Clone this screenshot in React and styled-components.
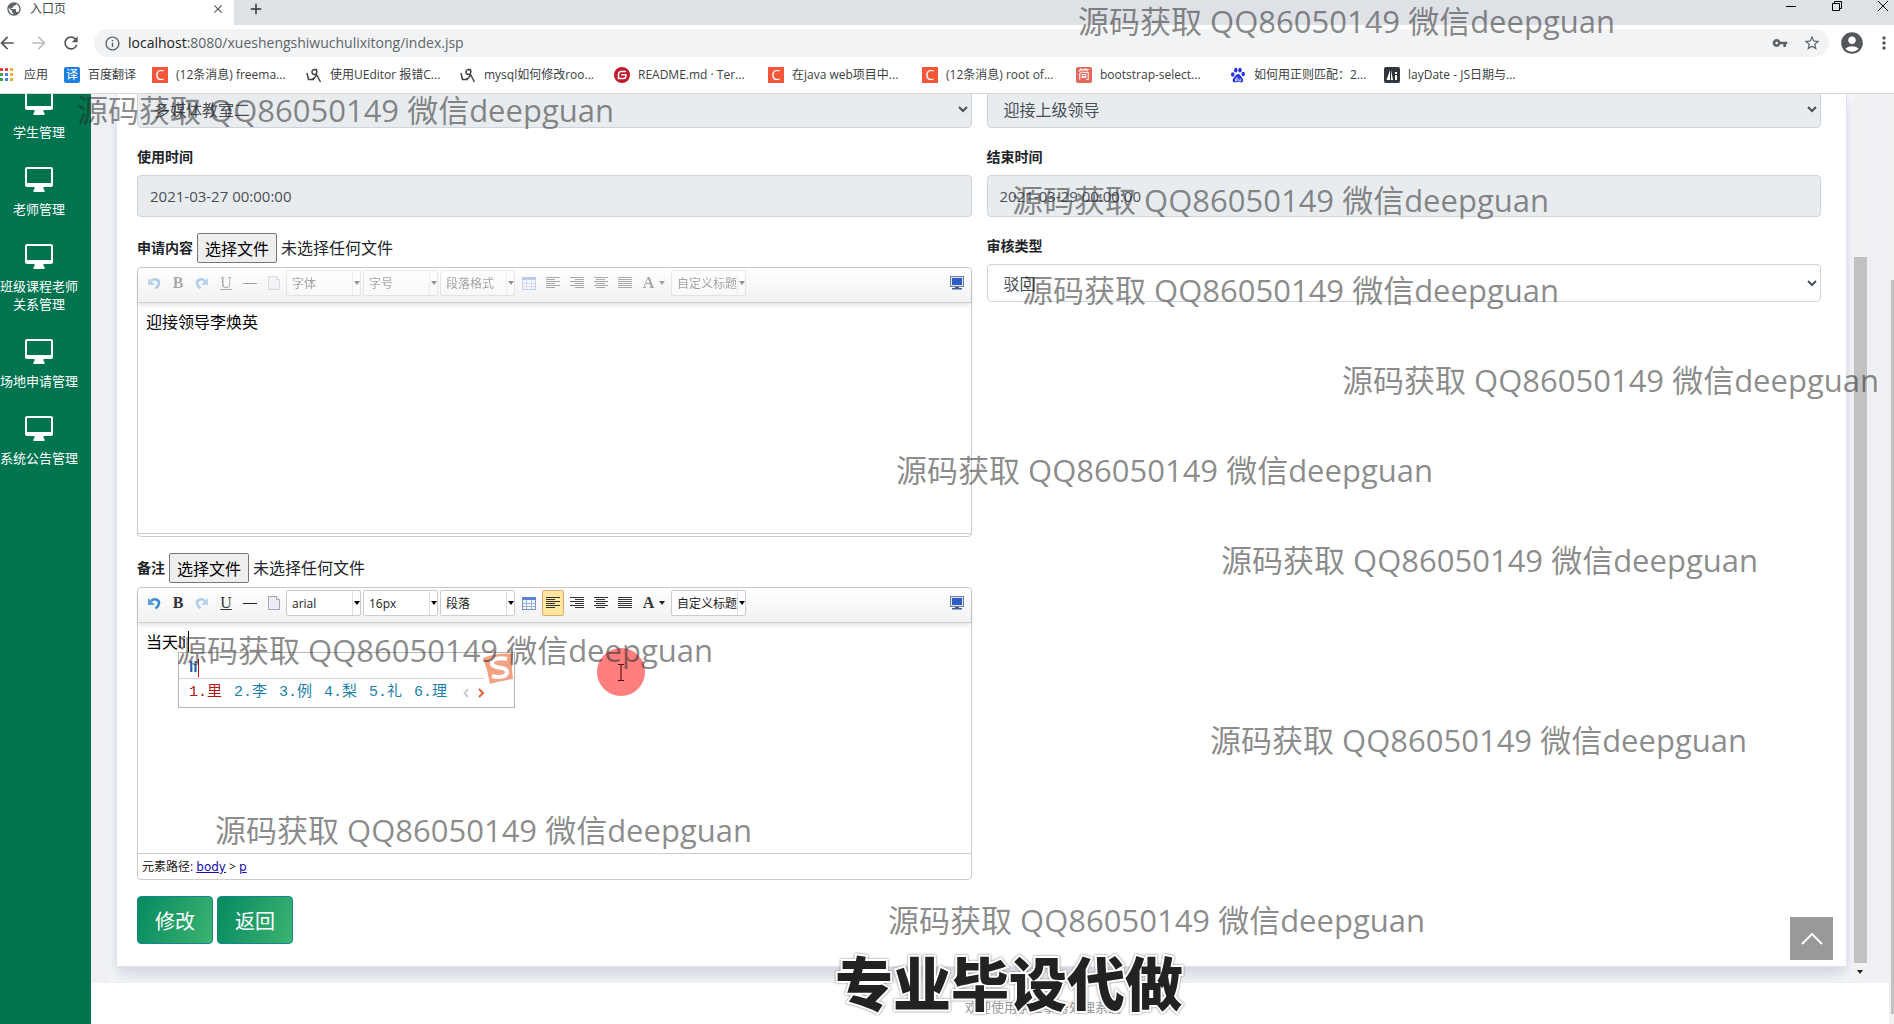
import { useState } from "react";
import styled, { createGlobalStyle, css } from "styled-components";
import {
  MdPublic,
  MdClose,
  MdAdd,
  MdArrowBack,
  MdArrowForward,
  MdRefresh,
  MdInfoOutline,
  MdVpnKey,
  MdStarBorder,
  MdAccountCircle,
  MdMoreVert,
} from "react-icons/md";

const bookmarks = [
  { icon: "translate", text: "百度翻译", compact: true },
  { icon: "csdn", text: "(12条消息) freema..." },
  { icon: "cnblogs", text: "使用UEditor 报错C..." },
  { icon: "cnblogs", text: "mysql如何修改roo..." },
  { icon: "gitee", text: "README.md · Ter..." },
  { icon: "csdn", text: "在java web项目中..." },
  { icon: "csdn", text: "(12条消息) root of..." },
  { icon: "jianshu", text: "bootstrap-select..." },
  { icon: "baidu", text: "如何用正则匹配：2..." },
  { icon: "laydate", text: "layDate - JS日期与..." },
];

const menus = ["学生管理", "老师管理", "班级课程老师关系管理", "场地申请管理", "系统公告管理"];

const candidates = ["里", "李", "例", "梨", "礼", "理"];

const marks = [
  [1078, 0],
  [77, 89],
  [1012, 179],
  [1022, 269],
  [1342, 359],
  [896, 449],
  [1221, 539],
  [176, 629],
  [1210, 719],
  [215, 809],
  [888, 899],
];

function BookmarkIcon({ kind }) {
  if (kind === "translate") return <Badge $bg="#1e7fe0" $round>译</Badge>;
  if (kind === "csdn") return <Badge $bg="#f4563a" $big>C</Badge>;
  if (kind === "jianshu") return <Badge $bg="#e2685b" $round>简</Badge>;
  if (kind === "gitee") {
    return (
      <svg width="16" height="16" viewBox="0 0 16 16">
        <circle cx="8" cy="8" r="8" fill="#c1182c" />
        <path d="M12 4.500H7.200A2.700 2.700 0 0 0 4.500 7.200V11.500H9.600A2.200 2.200 0 0 0 11.800 9.300V7.700H7.200" fill="none" stroke="#fff" strokeWidth="1.6" />
      </svg>
    );
  }
  if (kind === "cnblogs") {
    return (
      <svg width="16" height="16" viewBox="0 0 16 16" fill="none" stroke="#444" strokeWidth="1.5">
        <path d="M1 6l1.500 6.500h5.500" />
        <path d="M11 5a2.500 2.500 0 1 0-1.500 2.300C11 6.800 11.300 4 10 1.800" />
        <path d="M6 12c2 0 3.500-2 4.500-4.500L14.500 15" />
      </svg>
    );
  }
  if (kind === "baidu") {
    return (
      <svg width="16" height="16" viewBox="0 0 16 16" fill="#2932e1">
        <ellipse cx="2.800" cy="7.500" rx="1.800" ry="2.300" />
        <ellipse cx="5.800" cy="3.200" rx="1.700" ry="2.400" />
        <ellipse cx="10" cy="3.200" rx="1.700" ry="2.400" />
        <ellipse cx="13.200" cy="7" rx="1.700" ry="2.300" />
        <path d="M8 7c2 0 2.500 2 4 3.500s2 5-1 5c-1.500 0-2-.4-3-.4s-1.500.4-3 .4c-3 0-2.800-3.500-1-5S6 7 8 7z" />
        <path d="M7 10v4H5.500v-2H7M8.800 11.500V14h2v-2.500" fill="none" stroke="#fff" strokeWidth="0.8" />
      </svg>
    );
  }
  return (
    <svg width="16" height="16" viewBox="0 0 16 16">
      <rect width="16" height="16" rx="2" fill="#2f363c" />
      <path d="M6 3v10H2.500zM7 3l2 10H7zM11 8h2v5h-2zM11 5h2v2h-2z" fill="#fff" />
    </svg>
  );
}

function AppsIcon() {
  const colors = ["#d94436", "#d94436", "#e8b02c", "#38a05a", "#4a80e8", "#e8b02c", "#38a05a", "#4a80e8", "#e8b02c"];
  return (
    <svg width="14" height="14" viewBox="0 0 14 14">
      {colors.map((c, i) => (
        <rect key={i} x={(i % 3) * 5} y={Math.floor(i / 3) * 5} width="3" height="3" fill={c} />
      ))}
    </svg>
  );
}

function MonitorIcon() {
  return (
    <svg width="28" height="25" viewBox="0 0 28 25" fill="#fff">
      <path
        fillRule="evenodd"
        d="M2 0h24a2 2 0 0 1 2 2v16a2 2 0 0 1-2 2h-7.500v2l1 1v2H8.500v-2l1-1v-2H2a2 2 0 0 1-2-2V2a2 2 0 0 1 2-2zM2 2v14h24V2z"
      />
    </svg>
  );
}

function UndoIcon({ flip }) {
  return (
    <svg width="14" height="14" viewBox="0 0 14 14" fill="none">
      <g transform={flip ? "translate(14 0) scale(-1 1)" : undefined}>
        <path d="M4 5C8 1.500 12.800 4 11.800 8c-.4 2-1.800 3.500-3.300 4.500" stroke="#3f8bd0" strokeWidth="2.600" />
        <path d="M1 2v7h7z" fill="#5a9fdd" />
      </g>
    </svg>
  );
}

function LinesIcon({ align }) {
  const widths = align === "justify" ? [14, 14, 14, 14, 14, 14] : [14, 9, 14, 9, 14, 9];
  return (
    <svg width="14" height="14" viewBox="0 0 14 14" fill="#333">
      {widths.map((w, i) => {
        const x = align === "right" ? 14 - w : align === "center" ? Math.floor((14 - w) / 2) : 0;
        return <rect key={i} x={x} y={1 + i * 2} width={w} height="1" />;
      })}
    </svg>
  );
}

function TableIcon() {
  return (
    <svg width="14" height="14" viewBox="0 0 14 14">
      <rect x="0.500" y="1.500" width="13" height="12" fill="#f3f8ff" stroke="#7a93c8" />
      <rect x="0" y="1" width="14" height="3" fill="#5c83d6" />
      <path d="M1 7.500h12M1 10.500h12M4.500 4v9M9.500 4v9" stroke="#9fb4dd" />
    </svg>
  );
}

function PaperIcon() {
  return (
    <svg width="14" height="16" viewBox="0 0 14 16">
      <path d="M1.500 1.500h8l3 3v10h-11z" fill="#ececf2" stroke="#a9a9b5" />
      <path d="M9.500 1.500v3h3" fill="#fff" stroke="#a9a9b5" />
    </svg>
  );
}

function ScreenIcon() {
  return (
    <svg width="14" height="14" viewBox="0 0 14 14">
      <rect x="0.500" y="0.500" width="13" height="10" fill="#dfe6f2" stroke="#6d7f9e" />
      <rect x="2" y="2" width="10" height="7" fill="#2d5cc8" />
      <path d="M5 11h4v1h3v1.500H2V12h3z" fill="#41618f" />
    </svg>
  );
}

function Combo({ label, text, disabled }) {
  return (
    <ComboBox>
      <ComboSelect aria-label={label} disabled={disabled}>
        <option>{text}</option>
      </ComboSelect>
      <ComboArrow />
    </ComboBox>
  );
}

function Editor({ id, label, text, disabled, format, path, children }) {
  return (
    <Group>
      <UploadRow>
        <UploadLabel htmlFor={id}>{label}</UploadLabel>
        <FileButton type="button">选择文件</FileButton>
        <FileName>未选择任何文件</FileName>
      </UploadRow>
      <EditorBox>
        <EditorBar>
          <Tools $disabled={disabled}>
            <Tool aria-label="撤销"><UndoIcon /></Tool>
            <Tool>B</Tool>
            <Tool aria-label="重做" $dim={!disabled}><UndoIcon flip /></Tool>
            <Tool><u>U</u></Tool>
            <Tool aria-label="分隔线"><Dash /></Tool>
            <Tool aria-label="清空文档"><PaperIcon /></Tool>
            <Combo label="字体" text={format[0]} disabled={disabled} />
            <Combo label="字号" text={format[1]} disabled={disabled} />
            <Combo label="段落格式" text={format[2]} disabled={disabled} />
            <Tool aria-label="插入表格"><TableIcon /></Tool>
            <Tool aria-label="居左对齐" $active={!disabled}><LinesIcon align="left" /></Tool>
            <Tool aria-label="居右对齐"><LinesIcon align="right" /></Tool>
            <Tool aria-label="居中对齐"><LinesIcon align="center" /></Tool>
            <Tool aria-label="两端对齐"><LinesIcon align="justify" /></Tool>
            <Tool $wide>A<Triangle /></Tool>
            <Combo label="自定义标题" text="自定义标题" disabled={disabled} />
          </Tools>
          <Tool aria-label="全屏"><ScreenIcon /></Tool>
        </EditorBar>
        <EditorBody>
          <EditorText id={id} defaultValue={text} spellCheck={false} />
          {children}
        </EditorBody>
        <PathBar $open={path}>
          {path && (
            <>
              元素路径: <a href="#body">body</a> &gt; <a href="#p">p</a>
            </>
          )}
        </PathBar>
      </EditorBox>
    </Group>
  );
}

export default function App() {
  const [result, setResult] = useState("驳回");

  return (
    <Page>
      <GlobalStyle />

      <TabStrip>
        <Tab>
          <MdPublic size={16} />
          <TabTitle>入口页</TabTitle>
          <IconButton aria-label="关闭标签页"><MdClose size={14} /></IconButton>
        </Tab>
        <NewTab aria-label="新标签页"><MdAdd size={18} /></NewTab>
        <WindowButtons>
          <svg width="12" height="12" viewBox="0 0 12 12"><path d="M1 6.500h10" stroke="#000" /></svg>
          <svg width="12" height="12" viewBox="0 0 12 12" fill="none" stroke="#000">
            <path d="M1.500 3.500h7v7h-7zM3.500 3.500v-2h7v7h-2" />
          </svg>
          <svg width="12" height="12" viewBox="0 0 12 12"><path d="M1 1l10 10M11 1L1 11" stroke="#000" /></svg>
        </WindowButtons>
      </TabStrip>

      <AddressBar>
        <NavButtons>
          <IconButton aria-label="后退"><MdArrowBack size={20} /></IconButton>
          <IconButton aria-label="前进" $muted><MdArrowForward size={20} /></IconButton>
          <IconButton aria-label="刷新"><MdRefresh size={20} /></IconButton>
        </NavButtons>
        <Omnibox>
          <MdInfoOutline size={17} />
          <Url>
            <b>localhost</b>:8080/xueshengshiwuchulixitong/index.jsp
          </Url>
          <MdVpnKey size={16} />
          <MdStarBorder size={18} />
        </Omnibox>
        <ToolbarEnd>
          <IconButton aria-label="用户"><MdAccountCircle size={26} /></IconButton>
          <IconButton aria-label="更多"><MdMoreVert size={20} /></IconButton>
        </ToolbarEnd>
      </AddressBar>

      <BookmarkBar>
        <AppsLink href="#apps"><AppsIcon />应用</AppsLink>
        {bookmarks.map((b) => (
          <Bookmark href="#bookmark" key={b.text} $compact={b.compact}>
            <BookmarkIcon kind={b.icon} />
            {b.text}
          </Bookmark>
        ))}
      </BookmarkBar>

      <Body>
        <Sidebar>
          {menus.map((m) => (
            <MenuItem href="#menu" key={m}>
              <MonitorIcon />
              <span>{m}</span>
            </MenuItem>
          ))}
        </Sidebar>

        <Main>
          <Stage>
            <Frame>
              <Card>
                <Row>
                  <Select aria-label="教室" disabled><option>多媒体教室二</option></Select>
                  <Select aria-label="用途" disabled><option>迎接上级领导</option></Select>
                </Row>
                <Row>
                  <Group>
                    <Label htmlFor="start">使用时间</Label>
                    <Input id="start" readOnly value="2021-03-27 00:00:00" />
                  </Group>
                  <Group>
                    <Label htmlFor="end">结束时间</Label>
                    <Input id="end" readOnly value="2021-03-29 00:00:00" />
                  </Group>
                </Row>
                <Row>
                  <Editor id="content" label="申请内容" text="迎接领导李焕英" format={["字体", "字号", "段落格式"]} disabled />
                  <Group>
                    <Label htmlFor="result">审核类型</Label>
                    <Select id="result" value={result} onChange={(e) => setResult(e.target.value)}>
                      <option>驳回</option>
                      <option>通过</option>
                    </Select>
                  </Group>
                </Row>
                <Row>
                  <Editor id="remark" label="备注" text="当天li" format={["arial", "16px", "段落"]} path>
                    <Caret />
                    <Ime>
                      <ImeInput>li</ImeInput>
                      <ImeList>
                        {candidates.map((c, i) => (
                          <Candidate key={c} $first={i === 0}>{i + 1}.{c}</Candidate>
                        ))}
                        <ImePager>
                          <svg width="22" height="10" viewBox="0 0 22 10" fill="none" strokeWidth="2">
                            <path d="M5 1L1.500 5L5 9" stroke="#ccc" />
                            <path d="M16 1l4 4l-4 4" stroke="#e0603a" />
                          </svg>
                        </ImePager>
                      </ImeList>
                      <ImeLogo viewBox="0 0 32 32">
                        <path d="M1 5Q16-1 31 1Q29 14 31 26Q18 28 8 31Q6 18 1 5z" fill="#f2a283" />
                        <path d="M25 6C17 4 9 6 10 11c1 5 15 2 15 8c0 5-8 6-15 4" fill="none" stroke="#fff" strokeWidth="4" />
                      </ImeLogo>
                    </Ime>
                    <Pointer>
                      <svg width="8" height="17" viewBox="0 0 8 17">
                        <path d="M1 .5h2.500l.5.5l.5-.5H7M4 1v15M1 16.500h2.500l.5-.5l.5.500H7" fill="none" stroke="#400" />
                      </svg>
                    </Pointer>
                  </Editor>
                </Row>
                <Actions>
                  <ActionButton type="button">修改</ActionButton>
                  <ActionButton type="button">返回</ActionButton>
                </Actions>
                <BackTop aria-label="返回顶部">
                  <svg width="22" height="12" viewBox="0 0 22 12">
                    <path d="M1 11L11 1l10 10" fill="none" stroke="#fff" strokeWidth="2" />
                  </svg>
                </BackTop>
              </Card>
              <InnerScroll>
                <InnerThumb />
                <Triangle />
              </InnerScroll>
            </Frame>
          </Stage>
          <Footer>欢迎使用学生事务处理系统</Footer>
        </Main>
        <OuterScroll><OuterThumb /></OuterScroll>
      </Body>

      <Overlay>
        {marks.map(([x, y]) => (
          <Mark key={y} style={{ left: x, top: y }}>源码获取 QQ86050149 微信deepguan</Mark>
        ))}
        <Caption>专业毕设代做</Caption>
      </Overlay>
    </Page>
  );
}

const GlobalStyle = createGlobalStyle`
  * {
    box-sizing: border-box;
  }

  body {
    margin: 0;
    font-family: "Open Sans", "Noto Sans CJK SC", sans-serif;
  }

  button, input, select, textarea {
    font-family: inherit;
  }

  svg {
    flex-shrink: 0;
  }
`;

const Page = styled.div`
  position: relative;
  display: flex;
  flex-direction: column;
  height: 100vh;
  overflow: hidden;
  background: #fff;
`;

const TabStrip = styled.div`
  display: flex;
  height: 25px;
  background: #dee1e6;
`;

const Tab = styled.div`
  display: flex;
  align-items: center;
  width: 234px;
  padding: 0 9px 8px 6px;
  background: #fff;
  color: #5f6368;
`;

const TabTitle = styled.span`
  flex: 1;
  margin-left: 8px;
  font-size: 12px;
  line-height: 16px;
  color: #45494d;
`;

const IconButton = styled.button`
  display: flex;
  align-items: center;
  justify-content: center;
  padding: 0;
  border: none;
  background: none;
  color: ${({ $muted }) => ($muted ? "#bbbdc0" : "#54575b")};
`;

const NewTab = styled(IconButton)`
  flex: 1;
  justify-content: flex-start;
  padding: 0 0 8px 13px;
  color: #333;
  /* foot of the active tab curving into the strip */
  background: radial-gradient(circle at 8px 17px, transparent 8px, #fff 8px) 0 100% / 8px 25px no-repeat;
  background-clip: content-box;
`;

const WindowButtons = styled.div`
  display: flex;
  gap: 34px;
  padding-right: 5px;
`;

const AddressBar = styled.div`
  display: flex;
  align-items: center;
  height: 36px;
`;

const NavButtons = styled.div`
  display: flex;
  gap: 12px;
  width: 94px;
  margin-left: -3px;
  margin-right: 3px;
`;

const ToolbarEnd = styled.div`
  display: flex;
  align-items: center;
  justify-content: space-between;
  width: 55px;
`;

const Omnibox = styled.div`
  flex: 1;
  display: flex;
  align-items: center;
  gap: 15px;
  height: 28px;
  margin-right: 10px;
  padding: 0 8px 0 10px;
  border-radius: 14px;
  background: #f1f3f4;
  color: #5f6368;
`;

const Url = styled.span`
  flex: 1;
  margin-left: -8px;
  font-size: 14px;
  line-height: 20px;

  b {
    font-weight: 400;
    color: #202124;
  }
`;

const BookmarkBar = styled.nav`
  display: flex;
  align-items: center;
  height: 33px;
  padding-bottom: 4px;
  border-bottom: 1px solid #d6d8da;
`;

const Bookmark = styled.a`
  display: flex;
  align-items: center;
  gap: 8px;
  width: ${({ $compact }) => ($compact ? "88px" : "154px")};
  font-size: 12px;
  line-height: 16px;
  white-space: nowrap;
  text-decoration: none;
  color: #3c4043;
`;

const AppsLink = styled(Bookmark)`
  gap: 10px;
  width: 64px;
`;

const Badge = styled.span`
  width: 16px;
  height: 16px;
  border-radius: ${({ $round }) => ($round ? "2px" : "0")};
  background: ${({ $bg }) => $bg};
  color: #fff;
  font-size: ${({ $big }) => ($big ? "14px" : "12px")};
  line-height: 16px;
  text-align: center;
`;

const Body = styled.div`
  flex: 1;
  min-height: 0;
  display: flex;
`;

const Sidebar = styled.nav`
  width: 91px;
  overflow: hidden;
  background: #00744f;

  a:first-child {
    margin-top: -14px;
  }
`;

const MenuItem = styled.a`
  display: flex;
  flex-direction: column;
  align-items: center;
  gap: 8px;
  padding: 10px 13px 15px 0;
  border-bottom: 1px solid #04704d;
  color: #fff;
  font-size: 13px;
  line-height: 18px;
  text-align: center;
  text-decoration: none;
`;

const Main = styled.main`
  flex: 1;
  display: flex;
  flex-direction: column;
`;

const Stage = styled.div`
  padding: 0 22px 2px 19px;
  background: #eff0f4;
`;

const Frame = styled.div`
  display: flex;
  background: #f5f7fb;
`;

const Card = styled.section`
  position: relative;
  flex: 1;
  display: flex;
  flex-direction: column;
  gap: 16px;
  margin: 0 6px 14px;
  padding: 0 25px 22px 20px;
  border: 1px solid #dfe3ee;
  border-top: none;
  background: #fff;
  box-shadow: 0 8px 14px rgba(70, 80, 100, 0.2);
  clip-path: inset(0 -6px -14px -6px);

  > :first-child {
    margin-top: -4px;
  }
`;

const Row = styled.div`
  display: grid;
  grid-template-columns: 1fr 1fr;
  gap: 15px;
  align-items: start;
`;

const Group = styled.div`
  display: flex;
  flex-direction: column;
  min-width: 0;
`;

const Label = styled.label`
  margin-bottom: 5px;
  color: #212529;
  font-size: 14px;
  font-weight: 700;
  line-height: 26px;
`;

const field = css`
  width: 100%;
  border: 1px solid #ced4da;
  border-radius: 4px;
  color: #495057;
  font-size: 16px;
`;

const Select = styled.select`
  ${field}
  height: 38px;
  padding: 7px 12px 5px;
  background: #fff;

  &:disabled {
    background: #e9ecef;
    opacity: 1;
  }
`;

const Input = styled.input`
  ${field}
  height: 42px;
  padding: 6px 12px;
  background: #e9ecef;
  font-size: 15px;
`;

const UploadRow = styled.div`
  display: flex;
  align-items: center;
  gap: 4px;
  margin-bottom: 4px;
  color: #212529;
`;

const UploadLabel = styled.label`
  font-size: 14px;
  font-weight: 700;
  line-height: 24px;
`;

const FileButton = styled.button`
  width: 80px;
  height: 30px;
  padding: 0;
  border: 1px solid #767676;
  border-radius: 2px;
  background: #efefef;
  color: #000;
  font-size: 16px;
`;

const FileName = styled.span`
  font-size: 16px;
  line-height: 24px;
`;

const EditorBox = styled.div`
  border: 1px solid #ccc;
  border-radius: 4px;
  background: #fff;
`;

const EditorBar = styled.div`
  position: relative;
  display: flex;
  align-items: center;
  justify-content: space-between;
  height: 35px;
  padding: 0 2px 4px 4px;
  border-bottom: 1px solid #d0d0d0;
  border-radius: 4px 4px 0 0;
  background: linear-gradient(#fff, #f1f1f1);
  box-shadow: 0 2px 4px rgba(0, 0, 0, 0.12);
`;

const Tools = styled.div`
  display: flex;
  align-items: center;
  opacity: ${({ $disabled }) => ($disabled ? 0.4 : 1)};
`;

const Tool = styled.button.attrs({ type: "button" })`
  display: flex;
  align-items: center;
  justify-content: center;
  gap: 5px;
  width: ${({ $wide }) => ($wide ? "32px" : "22px")};
  height: 26px;
  margin: 0 1px;
  padding: 0;
  border: 1px solid ${({ $active }) => ($active ? "#dcac6c" : "transparent")};
  border-radius: 2px;
  background: ${({ $active }) => ($active ? "#ffe69f" : "none")};
  color: #333;
  font-family: "Liberation Serif", serif;
  font-size: 16px;
  font-weight: 700;
  line-height: 20px;
  opacity: ${({ $dim }) => ($dim ? 0.4 : 1)};

  u {
    font-weight: 400;
  }
`;

const Dash = styled.span`
  width: 14px;
  height: 1px;
  background: #222;
`;

const Triangle = styled.i`
  border: 3px solid transparent;
  border-top: 4px solid #222;
  border-bottom: none;
`;

const ComboBox = styled.span`
  display: flex;
  width: 75px;
  height: 26px;
  margin-right: 2px;
  border: 1px solid #ccc;
  border-radius: 2px;
  background: #fff;
`;

const ComboSelect = styled.select`
  appearance: none;
  flex: 1;
  min-width: 0;
  padding: 0 0 0 5px;
  border: none;
  background: none;
  color: #222;
  font-size: 12px;
  opacity: 1;
  text-overflow: clip;
`;

const ComboArrow = styled.span`
  display: flex;
  align-items: center;
  justify-content: center;
  width: 8px;
  border-left: 1px solid #ddd;

  &::after {
    content: "";
    border: 3px solid transparent;
    border-top: 4px solid #000;
    border-bottom: none;
  }
`;

const EditorBody = styled.div`
  position: relative;
  height: 230px;
`;

const EditorText = styled.textarea`
  display: block;
  width: 100%;
  height: 100%;
  padding: 7px 8px;
  border: none;
  outline: none;
  resize: none;
  background: none;
  color: #000;
  font-size: 16px;
  line-height: 24px;
`;

const PathBar = styled.div`
  height: ${({ $open }) => ($open ? "26px" : "3px")};
  padding: 0 4px;
  border-top: 1px solid #ccc;
  color: #222;
  font-size: 12px;
  line-height: 26px;

  a {
    color: #1a0dab;
    font-family: "DejaVu Sans", sans-serif;
  }
`;

const Caret = styled.span`
  position: absolute;
  top: 8px;
  left: 50px;
  width: 1px;
  height: 21px;
  background: #000;
`;

const Ime = styled.div`
  position: absolute;
  top: 29px;
  left: 40px;
  width: 337px;
  border: 1px solid #b5b5b5;
  background: #fff;
`;

const ImeInput = styled.div`
  width: 305px;
  height: 26px;
  padding: 3px 0 0 10px;
  border-bottom: 1px solid #d5d5d5;
  color: #1565b0;
  font-size: 14px;
  font-weight: 700;
  line-height: 22px;

  &::after {
    content: "";
    display: inline-block;
    height: 18px;
    border-left: 1px solid #c00;
    vertical-align: middle;
  }
`;

const ImeList = styled.div`
  display: flex;
  align-items: center;
  height: 28px;
  padding-left: 10px;
`;

const Candidate = styled.span`
  width: 45px;
  color: ${({ $first }) => ($first ? "#b31217" : "#1a7fa8")};
  font-family: "Liberation Mono", "Noto Sans CJK SC", monospace;
  font-size: 15px;
  line-height: 20px;
`;

const ImePager = styled.span`
  display: flex;
  margin-left: 4px;
`;

const ImeLogo = styled.svg`
  position: absolute;
  top: 0;
  right: 0;
  width: 32px;
  height: 32px;
`;

const Pointer = styled.div`
  position: absolute;
  top: 25px;
  left: 459px;
  display: flex;
  align-items: center;
  justify-content: center;
  width: 48px;
  height: 48px;
  border-radius: 50%;
  background: rgba(255, 0, 0, 0.5);
`;

const Actions = styled.div`
  display: flex;
  gap: 4px;
`;

const ActionButton = styled.button`
  width: 76px;
  height: 48px;
  padding: 0;
  border: 1px solid #17858f;
  border-radius: 4px;
  background: linear-gradient(110deg, #058a60, #3cb371);
  color: #fff;
  font-size: 20px;
`;

const BackTop = styled.button`
  position: absolute;
  right: 13px;
  bottom: 6px;
  display: flex;
  align-items: center;
  justify-content: center;
  width: 43px;
  height: 43px;
  padding: 0;
  border: none;
  background: #999;
`;

const InnerScroll = styled.div`
  display: flex;
  flex-direction: column;
  align-items: center;
  width: 14px;
  padding-bottom: 7px;
  background: #f1f1f1;
`;

const InnerThumb = styled.div`
  flex: 1;
  width: 13px;
  margin: 163px 0 7px;
  background: #c1c1c1;
`;

const Footer = styled.footer`
  flex: 1;
  padding: 14px 0 0 106px;
  background: #fff;
  color: #999;
  font-size: 13px;
  line-height: 20px;
  text-align: center;
`;

const OuterScroll = styled.div`
  width: 5px;
  padding: 186px 0 10px 2px;
  background: #f1f1f1;
`;

const OuterThumb = styled.div`
  height: 100%;
  background: #c1c1c1;
`;

const Overlay = styled.div`
  position: absolute;
  inset: 0;
  overflow: hidden;
  pointer-events: none;
`;

const Mark = styled.span`
  position: absolute;
  color: rgba(40, 40, 40, 0.55);
  font-size: 31px;
  line-height: 42px;
  white-space: nowrap;
`;

const Caption = styled.strong`
  position: absolute;
  left: 835px;
  bottom: 7px;
  color: #222;
  font-family: "Noto Sans CJK SC", sans-serif;
  font-size: 58px;
  font-weight: 900;
  line-height: 72px;
  white-space: nowrap;
  -webkit-text-stroke: 4px #fff;
  paint-order: stroke fill;
  filter: drop-shadow(0 0 1px #777);
`;
